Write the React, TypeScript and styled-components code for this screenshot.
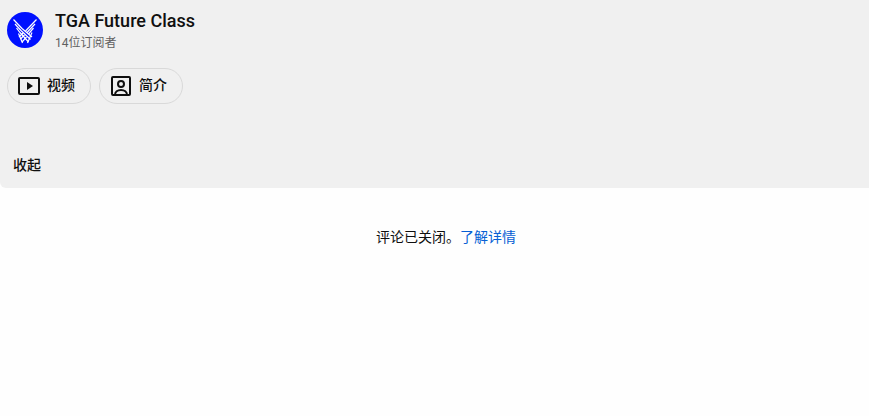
import React from "react";
import styled, { createGlobalStyle } from "styled-components";

const GlobalStyle = createGlobalStyle`
  * { box-sizing: border-box; }
  body {
    margin: 0;
    background: #fefefe;
    color: #0f0f0f;
    font-family: Roboto, "Noto Sans CJK SC", sans-serif;
    font-size: 14px;
    line-height: 20px;
  }
`;

const Description = styled.section`
  display: flex;
  flex-direction: column;
  align-items: flex-start;
  padding: 8px 7px 13px;
  background: #f0f0f0;
  border-bottom-left-radius: 6px;
`;

const Channel = styled.a`
  display: flex;
  align-items: center;
  gap: 12px;
  color: inherit;
  text-decoration: none;
`;

const Avatar = styled.svg`
  width: 36px;
  height: 36px;
`;

const ChannelText = styled.div`
  display: flex;
  flex-direction: column;
`;

const ChannelName = styled.h3`
  margin: 0;
  font-size: 18px;
  font-weight: 500;
  line-height: 26px;
`;

const Subscribers = styled.span`
  color: #606060;
  font-size: 12px;
  line-height: 18px;
`;

const Actions = styled.div`
  display: flex;
  gap: 8px;
  margin-top: 16px;
`;

const PillButton = styled.button`
  display: flex;
  align-items: center;
  gap: 6px;
  height: 36px;
  padding: 0 15px 0 9px;
  border: 1px solid #d9d9d9;
  border-radius: 18px;
  background: transparent;
  color: inherit;
  font: inherit;
  font-weight: 500;
  cursor: pointer;
`;

const ButtonLabel = styled.span`
  padding-bottom: 2px;
`;

const PillIcon = styled.svg`
  width: 24px;
  height: 24px;
  fill: none;
  stroke: #0f0f0f;
  stroke-width: 2;
`;

const CollapseButton = styled.button`
  margin: 51px 0 0;
  padding: 0 6px;
  border: 0;
  background: transparent;
  color: inherit;
  font: inherit;
  font-weight: 500;
  cursor: pointer;
`;

const CommentsMessage = styled.p`
  margin: 0;
  padding: 39px 0 0 23px;
  text-align: center;
`;

const LearnMore = styled.a`
  color: #065fd4;
  text-decoration: none;
`;

export default function App() {
  return (
    <>
      <GlobalStyle />
      <main>
        <Description>
          <Channel href="#channel">
            <Avatar viewBox="0 0 36 36" aria-hidden="true">
              <circle cx="18" cy="18" r="18" fill="#0010ff" />
              <g fill="none" stroke="#fff" strokeWidth="1.2">
                <path d="M6.5 7.500 15 16.500 25 25" />
                <path d="M8 12 14 18.500 23.500 27.500" />
                <path d="M9.500 16 13 20.500 21.500 30" />
                <path d="M29.500 7.500 18.500 19" />
                <path d="M28 12 20 20.500" />
                <path d="M26.500 16 21.500 22" />
                <path d="M16 21 12 25" />
                <path d="M17.500 23 13.500 27" />
                <path d="M19.500 25 15 30" />
                <path d="M11.500 21.500 15.500 31" />
                <path d="M25 20.500 20.500 31" />
              </g>
            </Avatar>
            <ChannelText>
              <ChannelName>TGA Future Class</ChannelName>
              <Subscribers>14位订阅者</Subscribers>
            </ChannelText>
          </Channel>
          <Actions>
            <PillButton type="button">
              <PillIcon viewBox="0 0 24 24" aria-hidden="true">
                <rect x="2" y="4" width="20" height="16" rx="1" />
                <path d="M10 8v8l6-4z" fill="#0f0f0f" stroke="none" />
              </PillIcon>
              <ButtonLabel>视频</ButtonLabel>
            </PillButton>
            <PillButton type="button">
              <PillIcon viewBox="0 0 24 24" aria-hidden="true">
                <rect x="3" y="3" width="18" height="18" rx="1" />
                <circle cx="12" cy="10" r="3" />
                <path d="M6 21c0-3 2.500-5 6-5s6 2 6 5" />
              </PillIcon>
              <ButtonLabel>简介</ButtonLabel>
            </PillButton>
          </Actions>
          <CollapseButton type="button">收起</CollapseButton>
        </Description>
        <CommentsMessage>
          评论已关闭。<LearnMore href="#learn-more">了解详情</LearnMore>
        </CommentsMessage>
      </main>
    </>
  );
}
